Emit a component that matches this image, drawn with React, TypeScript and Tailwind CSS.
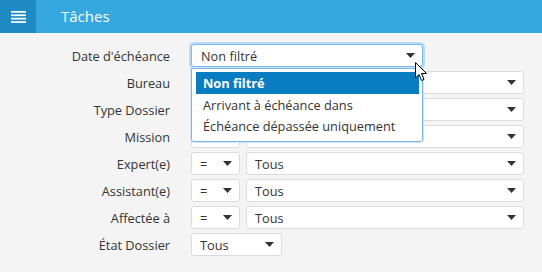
import React from "react";

const font = { fontFamily: '"Open Sans", "Noto Sans", sans-serif' };

const Arrow = () => (
  <svg width="9" height="5" viewBox="0 0 9 5" className="shrink-0">
    <path d="M0 0h9L4.5 5z" fill="#333" />
  </svg>
);

function Select({ value, className }: { value: string; className: string }) {
  return (
    <div
      className={`h-[23px] flex items-center justify-between border border-[#d8dce2] rounded-[3px] bg-white pl-[8px] pr-[7px] text-[12.75px] text-[#333] ${className}`}
    >
      <span className="mt-[3px]">{value}</span>
      <Arrow />
    </div>
  );
}

function Label({ text }: { text: string }) {
  return (
    <div className="h-[23px] flex items-center justify-end text-[12.75px] text-[#333]">
      <span className="mt-[3px]">{text}</span>
    </div>
  );
}

function OpRow() {
  return (
    <div className="flex gap-[6px]">
      <Select value="=" className="w-[49px]" />
      <Select value="Tous" className="w-[278px]" />
    </div>
  );
}

export default function App() {
  return (
    <div className="w-[542px] h-[272px] bg-[#f4f4f4] overflow-hidden relative" style={font}>
      <div className="h-[33px] bg-[#35a8df] flex items-center">
        <div className="w-[36px] h-[33px] bg-[#1f8bc4] flex items-center justify-center">
          <svg width="15" height="12" viewBox="0 0 15 12">
            <rect x="0" y="0" width="15" height="1.7" fill="#fff" />
            <rect x="0" y="3.4" width="15" height="1.7" fill="#fff" />
            <rect x="0" y="6.8" width="15" height="1.7" fill="#fff" />
            <rect x="0" y="10.2" width="15" height="1.7" fill="#fff" />
          </svg>
        </div>
        <div className="ml-[25px] text-white text-[15px]">Tâches</div>
      </div>

      <div className="grid grid-cols-[170px_1fr] gap-x-[21px] gap-y-[4px] pt-[11px]">
        <Label text="Date d'échéance" />
        <div className="relative">
          <div className="w-[232px] h-[23px] flex items-center justify-between border border-[#7db7ea] rounded-[3px] bg-white pl-[9px] pr-[7px] text-[12.75px] text-[#333] shadow-[0_0_0_2px_#b9dbf7]">
            <span className="mt-[3px]">Non filtré</span>
            <Arrow />
          </div>
          <div className="absolute left-0 top-[24px] w-[232px] z-10 bg-white border border-[#7db7ea] rounded-b-[3px] pl-[4px] pr-[3px] pt-[3px] pb-[5px] text-[12.75px] text-[#333] shadow-[0_0_0_1px_#cfe5f8]">
            <div className="h-[22px] flex items-center pl-[7px] bg-[#0a7dc2] text-white font-bold">
              <span className="mt-[2px]">Non filtré</span>
            </div>
            <div className="h-[21px] flex items-center pl-[7px]">
              <span className="mt-[2px]">Arrivant à échéance dans</span>
            </div>
            <div className="h-[21px] flex items-center pl-[7px]">
              <span className="mt-[2px]">Échéance dépassée uniquement</span>
            </div>
          </div>
        </div>

        <Label text="Bureau" />
        <OpRow />
        <Label text="Type Dossier" />
        <OpRow />
        <Label text="Mission" />
        <OpRow />
        <Label text="Expert(e)" />
        <OpRow />
        <Label text="Assistant(e)" />
        <OpRow />
        <Label text="Affectée à" />
        <OpRow />
        <Label text="État Dossier" />
        <div>
          <Select value="Tous" className="w-[91px]" />
        </div>
      </div>

      <svg className="absolute left-[415px] top-[62px] z-20" width="13" height="20" viewBox="0 0 13 20">
        <path d="M0.5 0.5 L0.5 16 L4 12.5 L6.5 18.5 L9 17.5 L6.5 11.5 L11.5 11.5 Z" fill="#fff" stroke="#000" strokeWidth="1" strokeLinejoin="round" />
      </svg>
    </div>
  );
}
